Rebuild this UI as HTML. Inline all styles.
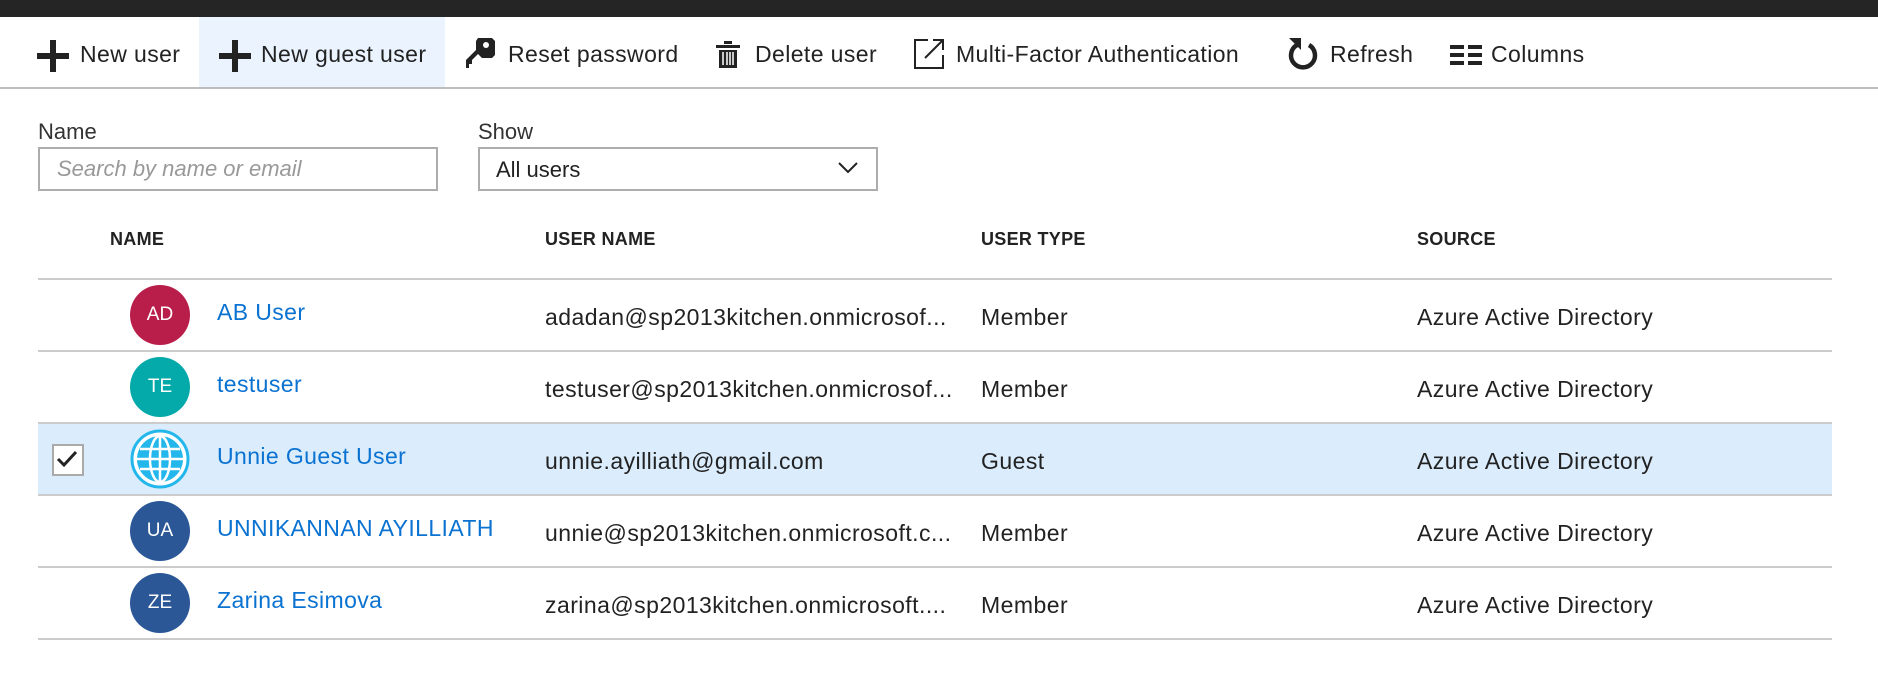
<!DOCTYPE html>
<html><head><meta charset="utf-8"><style>
body{margin:0;width:1878px;height:686px;background:#fff;font-family:"Liberation Sans",sans-serif;color:#222;position:relative;overflow:hidden}
.a{position:absolute;white-space:nowrap}
.tb{font-size:23px;top:41px;letter-spacing:0.4px}
.hd{font-size:18px;font-weight:bold;top:229px;letter-spacing:0.3px}
.line{position:absolute;left:38px;width:1794px;height:2px;background:#ccc}
.av{position:absolute;left:130px;width:60px;height:60px;border-radius:50%;color:#fff;font-size:19px;text-align:center;line-height:60px}
.nm{color:#0a72d1;font-size:23px;left:217px;letter-spacing:0.4px}
.c{font-size:23px;letter-spacing:0.45px}
</style></head><body>
<div class="a" style="left:0;top:0;width:1878px;height:17px;background:#252525"></div>
<div class="a" style="left:199px;top:17px;width:246px;height:71px;background:#eaf3fe"></div>
<div class="a" style="left:0;top:87px;width:1878px;height:2px;background:#bdbdbd"></div>
<svg class="a" style="left:37px;top:40px" width="32" height="32"><path d="M13 0h6v13h13v6H19v13h-6V19H0v-6h13z" fill="#222"/></svg>
<div class="a tb" style="left:80px">New user</div>
<svg class="a" style="left:219px;top:40px" width="32" height="32"><path d="M13 0h6v13h13v6H19v13h-6V19H0v-6h13z" fill="#222"/></svg>
<div class="a tb" style="left:261px">New guest user</div>
<svg class="a" style="left:466px;top:38px" width="30" height="34"><path d="M12 0h14l3 3v14l-3 3H16l-4-4L6 22v4H3v4H0v-8l10-10V3z" fill="#222"/><circle cx="20" cy="7" r="3" fill="#fff"/></svg>
<div class="a tb" style="left:508px">Reset password</div>
<svg class="a" style="left:716px;top:40px" width="24" height="30"><rect x="0" y="5" width="24" height="3" fill="#222"/><rect x="8" y="1" width="8" height="3" fill="#222"/><path d="M3 10h18v18H3z" fill="#222"/><path d="M7 12v13M11 12v13M14 12v13M17 12v13" stroke="#fff" stroke-width="1.5"/></svg>
<div class="a tb" style="left:755px">Delete user</div>
<svg class="a" style="left:914px;top:39px" width="30" height="30"><path d="M14 1H1v28h28V16" fill="none" stroke="#222" stroke-width="2"/><path d="M11 19L28 2M19 1h10v10" fill="none" stroke="#222" stroke-width="2"/></svg>
<div class="a tb" style="left:956px">Multi-Factor Authentication</div>
<svg class="a" style="left:1287px;top:36px" width="32" height="36"><path d="M10 9A12 12 0 1 0 22 9" fill="none" stroke="#222" stroke-width="4.5"/><path d="M2 2h12v12z" fill="#222"/></svg>
<div class="a tb" style="left:1330px">Refresh</div>
<svg class="a" style="left:1450px;top:45px" width="32" height="20"><g fill="#222"><rect x="0" y="0" width="14" height="4"/><rect x="0" y="8" width="14" height="4"/><rect x="0" y="16" width="14" height="4"/><rect x="18" y="0" width="14" height="4"/><rect x="18" y="8" width="14" height="4"/><rect x="18" y="16" width="14" height="4"/></g></svg>
<div class="a tb" style="left:1491px">Columns</div>
<div class="a" style="left:38px;top:119px;font-size:22px;color:#333">Name</div>
<div class="a" style="left:478px;top:119px;font-size:22px;color:#333">Show</div>
<div class="a" style="left:38px;top:147px;width:396px;height:40px;border:2px solid #adadad"></div>
<div class="a" style="left:57px;top:156px;font-size:22px;color:#999;font-style:italic">Search by name or email</div>
<div class="a" style="left:478px;top:147px;width:396px;height:40px;border:2px solid #adadad"></div>
<div class="a" style="left:496px;top:157px;font-size:22px">All users</div>
<svg class="a" style="left:838px;top:162px" width="20" height="12"><path d="M1 1l9 9 9-9" fill="none" stroke="#222" stroke-width="2"/></svg>
<div class="a hd" style="left:110px">NAME</div>
<div class="a hd" style="left:545px">USER NAME</div>
<div class="a hd" style="left:981px">USER TYPE</div>
<div class="a hd" style="left:1417px">SOURCE</div>
<div class="a" style="left:38px;top:424px;width:1794px;height:71px;background:#dbecfc"></div>
<div class="line" style="top:278px"></div><div class="line" style="top:350px"></div><div class="line" style="top:422px"></div><div class="line" style="top:494px"></div><div class="line" style="top:566px"></div><div class="line" style="top:638px"></div>
<div class="av" style="top:285px;background:#b91e4b">AD</div>
<div class="a nm" style="top:299px">AB User</div>
<div class="a c" style="left:545px;top:304px">adadan@sp2013kitchen.onmicrosof...</div>
<div class="a c" style="left:981px;top:304px">Member</div>
<div class="a c" style="left:1417px;top:304px">Azure Active Directory</div>

<div class="av" style="top:357px;background:#04a9a9">TE</div>
<div class="a nm" style="top:371px">testuser</div>
<div class="a c" style="left:545px;top:376px">testuser@sp2013kitchen.onmicrosof...</div>
<div class="a c" style="left:981px;top:376px">Member</div>
<div class="a c" style="left:1417px;top:376px">Azure Active Directory</div>

<div class="a" style="left:52px;top:444px;width:28px;height:28px;border:2px solid #aaa;background:#fff"></div>
<svg class="a" style="left:56px;top:449px" width="22" height="20"><path d="M2 10l6 6L20 3" fill="none" stroke="#222" stroke-width="3"/></svg>
<svg class="a" style="left:130px;top:429px" width="60" height="60"><circle cx="30" cy="30" r="28" fill="#fff" stroke="#23b7ec" stroke-width="3"/><circle cx="30" cy="30" r="23" fill="#23b7ec"/><g fill="none" stroke="#fff" stroke-width="2.5"><ellipse cx="30" cy="30" rx="10" ry="23"/><path d="M30 7v46M7 30h46M10 20h40M10 40h40"/></g></svg>
<div class="a nm" style="top:443px">Unnie Guest User</div>
<div class="a c" style="left:545px;top:448px">unnie.ayilliath@gmail.com</div>
<div class="a c" style="left:981px;top:448px">Guest</div>
<div class="a c" style="left:1417px;top:448px">Azure Active Directory</div>

<div class="av" style="top:501px;background:#2b5797">UA</div>
<div class="a nm" style="top:515px">UNNIKANNAN AYILLIATH</div>
<div class="a c" style="left:545px;top:520px">unnie@sp2013kitchen.onmicrosoft.c...</div>
<div class="a c" style="left:981px;top:520px">Member</div>
<div class="a c" style="left:1417px;top:520px">Azure Active Directory</div>

<div class="av" style="top:573px;background:#2b5797">ZE</div>
<div class="a nm" style="top:587px">Zarina Esimova</div>
<div class="a c" style="left:545px;top:592px">zarina@sp2013kitchen.onmicrosoft....</div>
<div class="a c" style="left:981px;top:592px">Member</div>
<div class="a c" style="left:1417px;top:592px">Azure Active Directory</div>
</body></html>
